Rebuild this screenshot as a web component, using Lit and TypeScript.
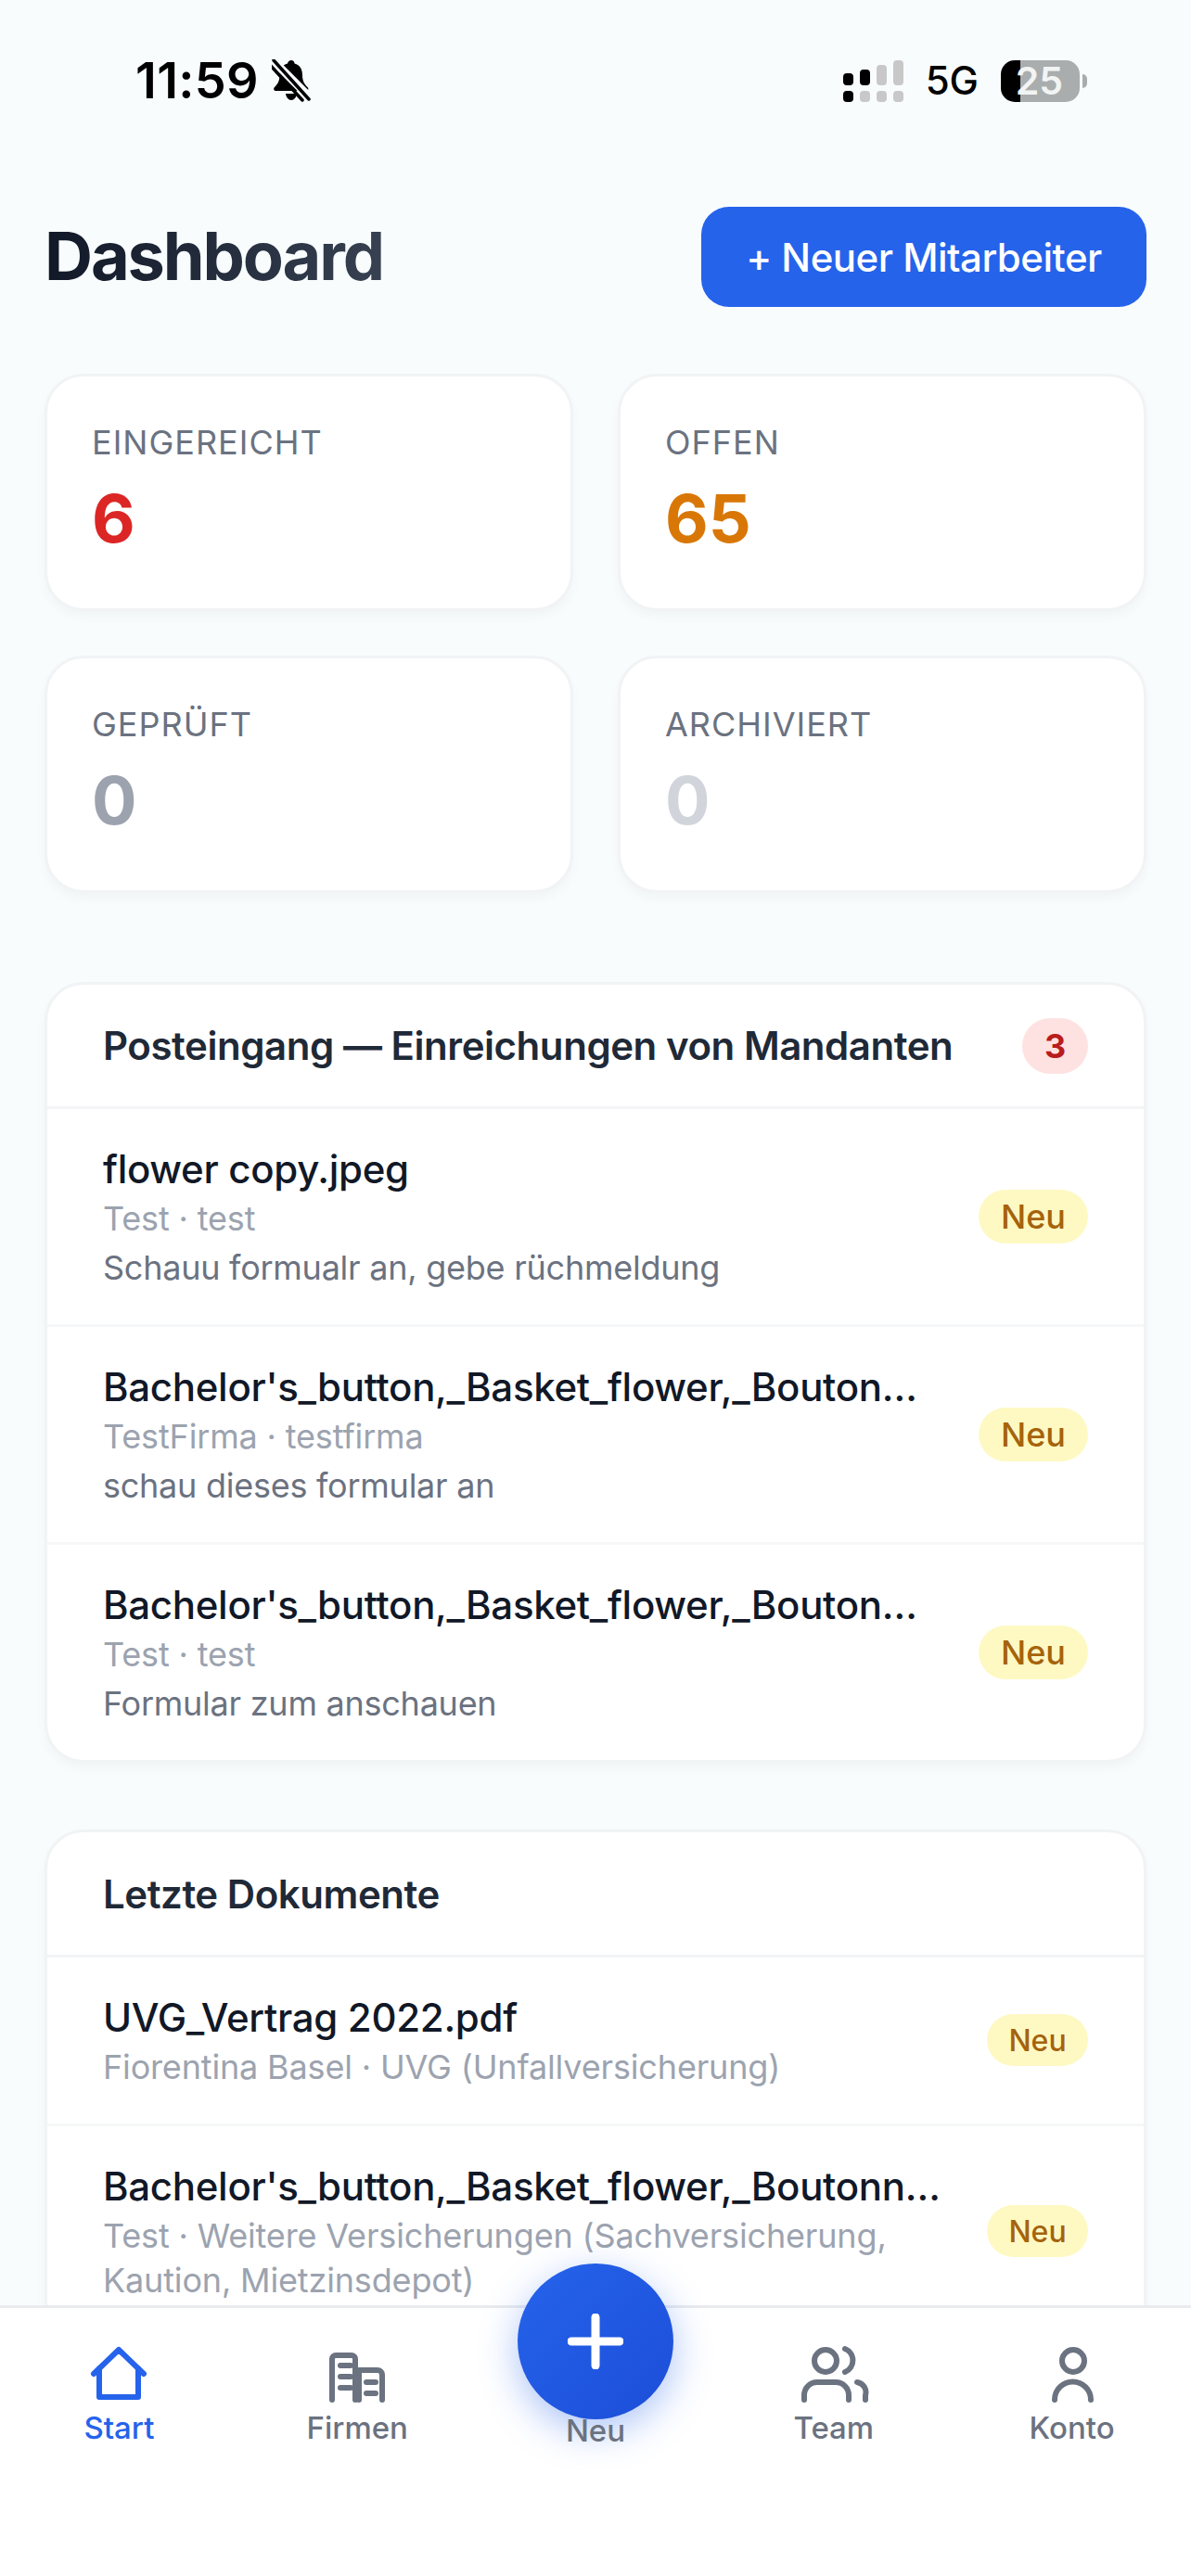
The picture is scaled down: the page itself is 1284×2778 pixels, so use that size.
import { LitElement, html, css, svg } from "lit";
import { customElement } from "lit/decorators.js";

interface Row { name: string; sub: string; note?: string; }

const inbox: Row[] = [
  { name: "flower copy.jpeg", sub: "Test · test", note: "Schauu formualr an, gebe rüchmeldung" },
  { name: "Bachelor's_button,_Basket_flower,_Boutonniere_flower.jpeg", sub: "TestFirma · testfirma", note: "schau dieses formular an" },
  { name: "Bachelor's_button,_Basket_flower,_Boutonniere_flower.jpeg", sub: "Test · test", note: "Formular zum anschauen" },
];
const docs: Row[] = [
  { name: "UVG_Vertrag 2022.pdf", sub: "Fiorentina Basel · UVG (Unfallversicherung)" },
  { name: "Bachelor's_button,_Basket_flower,_Boutonniere_flower.jpeg", sub: "Test · Weitere Versicherungen (Sachversicherung, Kaution, Mietzinsdepot)" },
];
const stats = [
  { label: "EINGEREICHT", value: "6", cls: "red" },
  { label: "OFFEN", value: "65", cls: "orange" },
  { label: "GEPRÜFT", value: "0", cls: "gray" },
  { label: "ARCHIVIERT", value: "0", cls: "light" },
];

const icons = {
  home: svg`<path d="M9 37 36 11 63 37M15 31V62H57V31"/>`,
  firm: svg`<path d="M9 65V21a4 4 0 0 1 4-4H30a4 4 0 0 1 4 4V65M38 65V33M38 33H58a5 5 0 0 1 5 5V65M18 28H29M18 40H29M18 52H29M46 46H56M46 58H56"/>`,
  team: svg`<circle cx="27" cy="23" r="12"/><path d="M48 10a13.500 13.500 0 0 1 0 25M4 65V60a14 14 0 0 1 14-14H38a14 14 0 0 1 14 14V65M61 46a11 11 0 0 1 9 14V65"/>`,
  user: svg`<circle cx="37" cy="23" r="12"/><path d="M17 65a19.500 19.500 0 0 1 39 0"/>`,
};

@customElement("app-root")
export class AppRoot extends LitElement {
  static styles = css`
    :host { display: block; width: 1284px; height: 2778px; overflow: hidden; background: #f8fcfd; font-family: Inter, "Liberation Sans", sans-serif; color: #1f2937; }
    .app { display: flex; flex-direction: column; height: 2778px; }
    .main { flex: 1; min-height: 0; overflow: hidden; }

    .status { height: 174px; display: flex; align-items: center; justify-content: space-between; padding: 0 112px 0 146px; color: #000; }
    .left, .right { display: flex; align-items: center; }
    .time { font-size: 54px; font-weight: 600; line-height: 60px; letter-spacing: 0.3px; }
    .bell { width: 42px; height: 46px; margin-left: 14px; }
    .signal { display: grid; grid-template-columns: repeat(4, 11px); column-gap: 7px; grid-template-rows: 27px 12px; row-gap: 6px; }
    .signal i { background: #c8c8c8; border-radius: 4px; align-self: end; }
    .signal i.on { background: #000; }
    .s1 { height: 13px; } .s2 { height: 17px; } .s3 { height: 22px; } .s4 { height: 27px; } .s5 { height: 12px; }
    .net { font-size: 42px; font-weight: 500; margin: 0 24px 0 24px; line-height: 50px; }
    .battery { position: relative; width: 85px; height: 45px; border-radius: 15px; background: linear-gradient(90deg, #000 21px, #a9adad 21px); display: flex; align-items: center; justify-content: flex-end; padding-right: 18px; box-sizing: border-box; color: #f2f4f4; font-size: 41px; font-weight: 600; line-height: 45px; }
    .nub { width: 5px; height: 15px; background: #a9adad; border-radius: 0 8px 8px 0; margin-left: 3px; }

    .head { display: flex; align-items: center; justify-content: space-between; padding: 0 48px; margin-top: 49px; }
    h1 { margin: 0; padding-bottom: 3px; font-size: 72px; font-weight: 700; line-height: 105px; letter-spacing: -2.1px; background: linear-gradient(90deg, #111827, #374151); -webkit-background-clip: text; background-clip: text; color: transparent; }
    .cta { width: 480px; height: 108px; border-radius: 30px; background: #2563eb; color: #fff; display: flex; align-items: center; justify-content: center; font-size: 42px; font-weight: 500; letter-spacing: -0.5px; }

    .stats { display: grid; grid-template-columns: 1fr 1fr; gap: 48px; padding: 0 48px; margin-top: 72px; }
    .stat { height: 256px; box-sizing: border-box; background: #fff; border: 3px solid #f1f3f5; border-radius: 42px; padding: 47px 48px; box-shadow: 0 6px 12px rgba(0,0,0,.03); }
    .label { font-size: 36px; line-height: 48px; letter-spacing: 1px; color: #6b7280; font-weight: 400; }
    .value { font-size: 72px; line-height: 72px; font-weight: 700; margin-top: 22px; }
    .red { color: #dc2626; } .orange { color: #d97706; } .gray { color: #9ca3af; } .light { color: #d1d5db; }

    .card { background: #fff; border: 3px solid #f1f3f5; border-radius: 42px; margin: 0 48px; box-shadow: 0 6px 12px rgba(0,0,0,.03); overflow: hidden; }
    .inbox { margin-top: 96px; }
    .docs { margin-top: 72px; }
    .card-head { display: flex; align-items: center; justify-content: space-between; padding: 0 60px; border-bottom: 3px solid #f3f4f6; color: #1f2937; font-size: 42px; font-weight: 600; letter-spacing: -0.45px; }
    .inbox .card-head { height: 131px; }
    .docs .card-head { height: 132px; }
    .count { width: 71px; height: 60px; border-radius: 30px; background: #fee2e2; color: #b91c1c; font-size: 36px; font-weight: 700; display: flex; align-items: center; justify-content: center; }
    .row { display: flex; align-items: center; justify-content: space-between; gap: 54px; padding: 36px 60px 37px; border-bottom: 3px solid #f6f7f8; }
    .row:last-child { border-bottom: none; }
    .body { flex: 1; min-width: 0; }
    .name { font-size: 42px; line-height: 58px; font-weight: 500; letter-spacing: -0.3px; color: #111827; white-space: nowrap; overflow: hidden; text-overflow: ellipsis; }
    .sub { font-size: 36px; line-height: 48px; color: #9ca3af; letter-spacing: -0.16px; }
    .note { font-size: 36px; line-height: 48px; color: #6b7280; margin-top: 5px; letter-spacing: -0.25px; }
    .pill { flex: none; border-radius: 30px; background: #fef9c3; color: #a5630c; font-weight: 500; display: flex; align-items: center; justify-content: center; }
    .inbox .pill { width: 118px; height: 58px; font-size: 36px; }
    .docs .pill { width: 109px; height: 56px; font-size: 32px; }
    .docs .row { gap: 44px; }

    .nav { position: relative; flex: none; height: 292px; box-sizing: border-box; border-top: 3px solid #e9ebee; background: #fff; display: grid; grid-template-columns: repeat(5, 1fr); color: #6b7280; }
    .item { display: flex; flex-direction: column; align-items: center; padding-top: 34px; font-size: 33px; font-weight: 500; line-height: 44px; }
    .item svg { width: 72px; height: 72px; overflow: visible; fill: none; stroke: currentColor; stroke-width: 6; stroke-linecap: round; stroke-linejoin: round; margin-bottom: 1px; }
    .item.active { color: #2563eb; }
    .item.new { justify-content: flex-start; padding-top: 110px; position: relative; z-index: 2; }
    .fab { position: absolute; left: 558px; top: -48px; width: 168px; height: 168px; border-radius: 50%; background: linear-gradient(135deg, #2563eb, #1d4ed8); box-shadow: 0 12px 42px rgba(37,99,235,.38); display: flex; align-items: center; justify-content: center; }
    .fab svg { width: 60px; height: 60px; stroke: #fff; stroke-width: 9; stroke-linecap: round; fill: none; }
  `;

  private row(r: Row) {
    return html`<div class="row">
      <div class="body">
        <div class="name">${r.name}</div>
        <div class="sub">${r.sub}</div>
        ${r.note ? html`<div class="note">${r.note}</div>` : ""}
      </div>
      <div class="pill">Neu</div>
    </div>`;
  }

  render() {
    return html`<div class="app">
      <div class="main">
        <div class="status">
          <div class="left">
            <span class="time">11:59</span>
            <svg class="bell" viewBox="0 0 42 46">
              <path fill="#000" d="M21 1c-2 0-3.500 1.500-4 3.500C11 6 8.500 11 8.500 17c0 6-2 9.500-5.500 13-1.500 1.500-1 4 1.500 4H37c2.500 0 3-2.500 1.500-4-3.500-3.500-5.500-7-5.500-13 0-6-2.500-11-8.500-12.500C24.500 2.500 23 1 21 1ZM15 37c.5 4 3 7 6 7s5.500-3 6-7Z"/>
              <path stroke="#f8fcfd" stroke-width="9" d="M1 1 42 42"/>
              <path stroke="#000" stroke-width="3.500" stroke-linecap="round" d="M2 1 40 43M-2 6 33 44" fill="none"/>
            </svg>
          </div>
          <div class="right">
            <div class="signal">
              <i class="on s1"></i><i class="on s2"></i><i class="s3"></i><i class="s4"></i>
              <i class="on s5"></i><i class="s5"></i><i class="s5"></i><i class="s5"></i>
            </div>
            <span class="net">5G</span>
            <div class="battery">25</div>
            <div class="nub"></div>
          </div>
        </div>

        <div class="head">
          <h1>Dashboard</h1>
          <div class="cta">+ Neuer Mitarbeiter</div>
        </div>

        <div class="stats">
          ${stats.map((s) => html`<div class="stat">
            <div class="label">${s.label}</div>
            <div class="value ${s.cls}">${s.value}</div>
          </div>`)}
        </div>

        <section class="card inbox">
          <div class="card-head"><span>Posteingang — Einreichungen von Mandanten</span><span class="count">3</span></div>
          ${inbox.map((r) => this.row(r))}
        </section>

        <section class="card docs">
          <div class="card-head"><span>Letzte Dokumente</span></div>
          ${docs.map((r) => this.row(r))}
        </section>
      </div>

      <nav class="nav">
        <div class="item active"><svg viewBox="0 0 72 72">${icons.home}</svg>Start</div>
        <div class="item"><svg viewBox="0 0 72 72">${icons.firm}</svg>Firmen</div>
        <div class="item new">Neu</div>
        <div class="item"><svg viewBox="0 0 72 72">${icons.team}</svg>Team</div>
        <div class="item"><svg viewBox="0 0 72 72">${icons.user}</svg>Konto</div>
        <div class="fab"><svg viewBox="0 0 60 60"><path d="M30 4V56M4 30H56"/></svg></div>
      </nav>
    </div>`;
  }
}
